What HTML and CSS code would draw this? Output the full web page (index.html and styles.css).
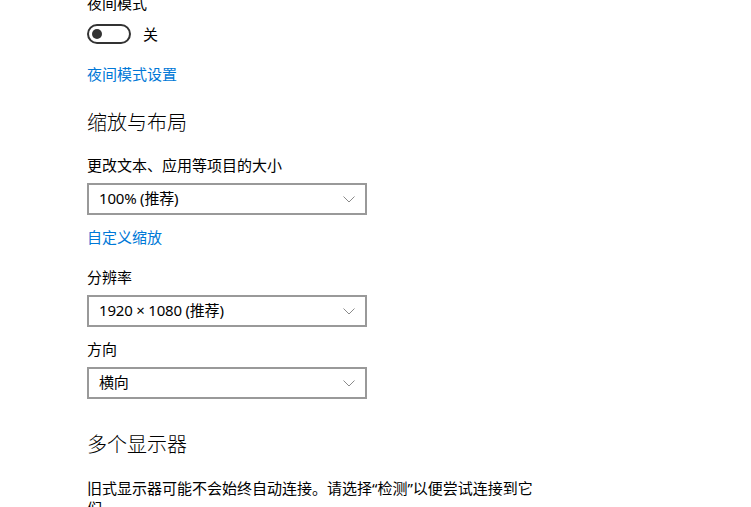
FILE: index.html
```html
<!DOCTYPE html>
<html lang="zh-CN">
<head>
  <meta charset="UTF-8" />
  <title>显示设置</title>
  <link rel="stylesheet" href="styles.css">
</head>
<body>

<div class="page">
  <div class="label night-label">夜间模式</div>
  <div class="toggle-row">
    <span class="toggle"><span class="knob"></span></span>
    <span class="toggle-text">关</span>
  </div>
  <a class="link night-link" href="#">夜间模式设置</a>

  <h2 class="heading">缩放与布局</h2>

  <div class="label">更改文本、应用等项目的大小</div>
  <div class="select">
    <span>100% (推荐)</span>
    <svg class="chevron" width="12" height="7" viewBox="0 0 12 7"><path d="M0.5 0.5 L6 6 L11.5 0.5" fill="none" stroke="#8a8a8a" stroke-width="1"/></svg>
  </div>
  <a class="link scale-link" href="#">自定义缩放</a>

  <div class="label">分辨率</div>
  <div class="select">
    <span>1920 × 1080 (推荐)</span>
    <svg class="chevron" width="12" height="7" viewBox="0 0 12 7"><path d="M0.5 0.5 L6 6 L11.5 0.5" fill="none" stroke="#8a8a8a" stroke-width="1"/></svg>
  </div>

  <div class="label orient-label">方向</div>
  <div class="select">
    <span>横向</span>
    <svg class="chevron" width="12" height="7" viewBox="0 0 12 7"><path d="M0.5 0.5 L6 6 L11.5 0.5" fill="none" stroke="#8a8a8a" stroke-width="1"/></svg>
  </div>

  <h2 class="heading multi-heading">多个显示器</h2>

  <p class="desc">旧式显示器可能不会始终自动连接。请选择“检测”以便尝试连接到它们。</p>
</div>

</body>
</html>
```

FILE: styles.css
```css
body {
  margin: 0;
  background: #fff;
  color: #000;
  font-family: "Segoe UI", "Noto Sans", "Noto Sans CJK SC", sans-serif;
  font-size: 15px;
  overflow: hidden;
}
.page {
  padding: 0 0 0 87px;
  margin-top: -7px;
}
.label {
  line-height: 20px;
  height: 20px;
}
.toggle-row {
  display: flex;
  align-items: center;
  gap: 12px;
  margin-top: 11px;
  height: 20px;
}
.toggle {
  box-sizing: border-box;
  width: 44px;
  height: 20px;
  border: 2px solid #333;
  border-radius: 10px;
  display: flex;
  align-items: center;
  padding-left: 3px;
}
.knob {
  width: 10px;
  height: 10px;
  border-radius: 50%;
  background: #333;
}
.toggle-text {
  line-height: 20px;
}
.link {
  display: block;
  color: #0078d7;
  text-decoration: none;
  line-height: 20px;
  height: 20px;
}
.night-link {
  margin-top: 20px;
}
.heading {
  font-weight: 300;
  font-size: 20px;
  line-height: 28px;
  margin: 25px 0 18px;
}
.select {
  box-sizing: border-box;
  width: 280px;
  height: 32px;
  border: 2px solid #999;
  margin-top: 8px;
  display: flex;
  align-items: center;
  justify-content: space-between;
  padding: 0 10px 3px 10px;
  letter-spacing: -0.2px;
}
.chevron {
  display: block;
  margin-top: 3px;
}
.scale-link {
  margin-top: 12px;
  margin-bottom: 20px;
}
.orient-label {
  margin-top: 12px;
}
.multi-heading {
  margin-top: 32px;
  margin-bottom: 0;
}
.desc {
  width: 456px;
  margin: 19px 0 0;
  line-height: 20px;
}
```
